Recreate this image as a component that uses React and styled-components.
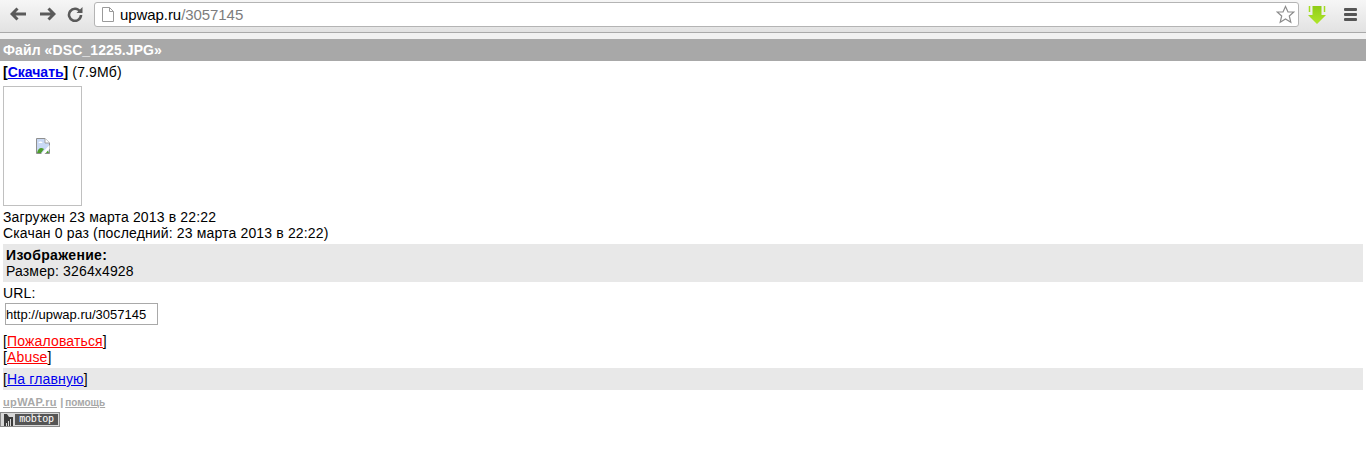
import React from 'react';
import styled, { createGlobalStyle } from 'styled-components';

const GlobalStyle = createGlobalStyle`
  html, body {
    margin: 0;
    padding: 0;
    background: #fff;
  }
  body {
    font-family: "Liberation Sans", Arial, sans-serif;
    font-size: 14px;
    line-height: 16px;
    letter-spacing: 0.15px;
    color: #000;
  }
`;

const Toolbar = styled.div`
  height: 32px;
  display: flex;
  align-items: flex-start;
  background: linear-gradient(#f6f6f6, #e2e2e2);
  border-bottom: 1px solid #a9a9a9;
  letter-spacing: normal;
`;

const NavButton = styled.div`
  width: ${p => p.$w}px;
  height: ${p => p.$h || 28}px;
  display: flex;
  align-items: center;
  justify-content: center;
  flex: none;
`;

const Omnibox = styled.div`
  flex: 1;
  height: 23px;
  margin-top: 2px;
  background: #fff;
  border: 1px solid #b4b4b4;
  border-radius: 3px;
  display: flex;
  align-items: center;
  padding: 0 3px 0 7px;
`;

const Url = styled.div`
  flex: 1;
  margin-left: 6px;
  font-size: 15px;
  letter-spacing: -0.07px;
  color: #000;
`;

const UrlPath = styled.span`
  color: #7d7d7d;
`;

const Strip = styled.div`
  height: 6px;
  background: #f1f1f1;
`;

const Header = styled.h1`
  margin: 0;
  height: 22px;
  padding-left: 3px;
  background: #a8a8a8;
  color: #fff;
  font-size: 14px;
  font-weight: bold;
  line-height: 22px;
  letter-spacing: 0.1px;
`;

const Content = styled.div`
  padding: 3px 3px 0;
`;

const Line = styled.div``;

const Strong = styled.b`
  letter-spacing: ${p => p.$spacing || '0'};
`;

const Link = styled.a`
  color: ${p => p.$color || '#0000ee'};
  text-decoration: underline;
`;

const ImageFrame = styled.div`
  width: 77px;
  height: 118px;
  margin: 6px 0 3px;
  border: 1px solid #c0c0c0;
  display: flex;
  align-items: center;
  justify-content: center;
`;

const InfoBlock = styled.div`
  margin-top: 3px;
  padding: 3px;
  background: #e8e8e8;
`;

const UrlBlock = styled.div`
  margin-top: 3px;
`;

const UrlInput = styled.input`
  display: block;
  box-sizing: border-box;
  width: 153px;
  height: 22px;
  margin: 2px 0 8px 2px;
  padding: 1px 0 0;
  border: 1px solid #a9a9a9;
  border-radius: 0;
  outline: none;
  font-family: "Liberation Sans", Arial, sans-serif;
  font-size: 13px;
  letter-spacing: 0;
  color: #000;
`;

const NavBlock = styled.div`
  margin-top: 3px;
  padding: 3px 0;
  background: #e8e8e8;
`;

const Footer = styled.div`
  margin-top: 6px;
  font-size: 11px;
  font-weight: bold;
  line-height: 13px;
  letter-spacing: 0.35px;
  color: #a8a8a8;
`;

const FooterLink = styled.a`
  color: #a8a8a8;
  text-decoration: underline;
`;

const HelpLink = styled(FooterLink)`
  margin-left: -2px;
  font-size: 10px;
  letter-spacing: 0;
`;

const Badge = styled.div`
  box-sizing: border-box;
  width: 60px;
  height: 15px;
  margin: 3px 0 0 -3px;
  display: flex;
  align-items: stretch;
  border: 1px solid #8a8a8a;
  background: #d8d8d8;
`;

const BadgeIcon = styled.div`
  width: 14px;
  flex: none;
  display: flex;
  align-items: center;
  justify-content: center;
`;

const BadgeText = styled.span`
  flex: 1;
  text-align: center;
  margin: 1px 1px 1px 0;
  background: #555;
  color: #fff;
  font-family: "DejaVu Sans Mono", monospace;
  font-size: 10px;
  line-height: 10px;
  letter-spacing: -0.3px;
`;

const Arrow = ({ flip }) => (
  <svg width="16" height="14" viewBox="0 0 16 14" style={flip ? { transform: 'scaleX(-1)' } : undefined}>
    <path d="M7.500 1.500 2 7l5.500 5.500M2.500 7H16" fill="none" stroke="#5a5a5a" strokeWidth="3" />
  </svg>
);

const Reload = () => (
  <svg width="16" height="16" viewBox="0 0 16 16">
    <path d="M13 5.500A6 6 0 1 0 14 9" fill="none" stroke="#5a5a5a" strokeWidth="2.600" />
    <path d="M9.500 7 15.500 7 15.500 1z" fill="#5a5a5a" />
  </svg>
);

const PageIcon = () => (
  <svg width="12" height="15" viewBox="0 0 12 15">
    <path d="M.5.500h7l4 4v10H.5z M7.500.500v4h4" fill="#fff" stroke="#9a9a9a" />
  </svg>
);

const Star = () => (
  <svg width="19" height="19" viewBox="0 0 19 19">
    <path d="M9.500 1.500 12 7h5.800l-4.500 4 1.500 6.300-5.300-3.300-5.300 3.300 1.500-6.300-4.500-4H7z" fill="#fff" stroke="#8c8c8c" strokeWidth="1.200" />
  </svg>
);

const DownloadIcon = () => (
  <svg width="18" height="18" viewBox="0 0 18 18">
    <defs>
      <linearGradient id="dl" x1="0" y1="0" x2="0" y2="1">
        <stop offset="0" stopColor="#8fcc16" />
        <stop offset="1" stopColor="#b0e62a" />
      </linearGradient>
    </defs>
    <path d="M4.500 0h9v9H18l-9 9-9-9h4.500z" fill="url(#dl)" />
    <path d="M1.500 0v6M16.500 0v6" stroke="#a3dc22" strokeWidth="1.500" />
  </svg>
);

const Menu = () => (
  <svg width="13" height="13" viewBox="0 0 13 13">
    <rect width="13" height="3" rx="1" fill="#555" />
    <rect y="5" width="13" height="3" rx="1" fill="#555" />
    <rect y="10" width="13" height="3" rx="1" fill="#555" />
  </svg>
);

const BrokenImage = () => (
  <svg width="14" height="16" viewBox="0 0 14 16">
    <path d="M.5.500h8.500l4.500 4.500v10.500H.5z" fill="#c9d9f4" stroke="#8f8f8f" />
    <path d="M9 .500v4.500h4.500" fill="#fff" stroke="#a0a0a0" />
    <path d="M2.500 5c0-2 4-2 4 0z" fill="#fff" />
    <path d="M1 15c1-5 4-6 7-4l-3 4z" fill="#4f9e2c" />
    <path d="M11.500 11.500l1.500 3.500h-3z" fill="#4f9e2c" />
    <path d="M13.500 7 5 16h3.500l5-5z" fill="#fff" />
  </svg>
);

const BarsIcon = () => (
  <svg width="12" height="13" viewBox="0 0 12 13">
    <path d="M2 1h3l2 3h4v9H2z" fill="#3c3c3c" />
    <path d="M4 10h1v3H4zM6 8h1v5H6zM8 6h1v7H8z" fill="#d8d8d8" />
  </svg>
);

const App = () => {
  return (
    <>
      <GlobalStyle />
      <Toolbar>
        <NavButton $w={35}><Arrow /></NavButton>
        <NavButton $w={26}><Arrow flip /></NavButton>
        <NavButton $w={28}><Reload /></NavButton>
        <NavButton $w={5} />
        <Omnibox>
          <PageIcon />
          <Url>upwap.ru<UrlPath>/3057145</UrlPath></Url>
          <Star />
        </Omnibox>
        <NavButton $w={36} $h={30}><DownloadIcon /></NavButton>
        <NavButton $w={31}><Menu /></NavButton>
      </Toolbar>
      <Strip />
      <Header>Файл «DSC_1225.JPG»</Header>
      <Content>
        <Line><Strong>[<Link href="#">Скачать</Link>]</Strong> (7.9Мб)</Line>
        <ImageFrame><BrokenImage /></ImageFrame>
        <Line>Загружен 23 марта 2013 в 22:22</Line>
        <Line>Скачан 0 раз (последний: 23 марта 2013 в 22:22)</Line>
        <InfoBlock>
          <Line><Strong $spacing="0.33px">Изображение:</Strong></Line>
          <Line>Размер: 3264x4928</Line>
        </InfoBlock>
        <UrlBlock>
          <Line>URL:</Line>
          <UrlInput readOnly defaultValue="http://upwap.ru/3057145" />
        </UrlBlock>
        <Line>[<Link href="#" $color="#ff0000">Пожаловаться</Link>]</Line>
        <Line>[<Link href="#" $color="#ff0000">Abuse</Link>]</Line>
        <NavBlock>[<Link href="#">На главную</Link>]</NavBlock>
        <Footer>
          <FooterLink href="#">upWAP.ru</FooterLink> | <HelpLink href="#">помощь</HelpLink>
        </Footer>
        <Badge>
          <BadgeIcon><BarsIcon /></BadgeIcon>
          <BadgeText>mobtop</BadgeText>
        </Badge>
      </Content>
    </>
  );
};

export default App;
